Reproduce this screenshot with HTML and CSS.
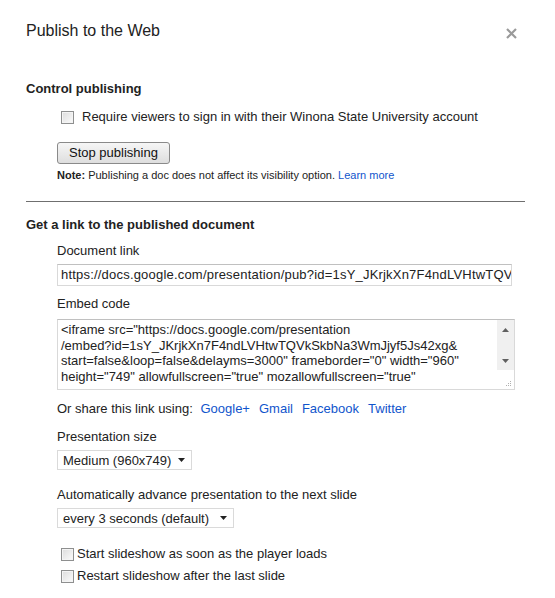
FILE: index.html
```html
<!DOCTYPE html>
<html>
<head>
<meta charset="utf-8">
<link rel="stylesheet" href="styles.css">
</head>
<body>
<div class="dialog">
  <div class="header">
    <div class="title">Publish to the Web</div>
    <svg class="close" width="11" height="11" viewBox="0 0 11 11"><path d="M1 1L10 10M10 1L1 10" stroke="#9a9a9a" stroke-width="2.2" fill="none"/></svg>
  </div>

  <div class="h2 h2-first">Control publishing</div>
  <div class="indent">
    <div class="check-row check-row-top"><span class="cb"></span><span>Require viewers to sign in with their Winona State University account</span></div>
    <div class="btn">Stop publishing</div>
    <div class="note"><b>Note:</b> Publishing a doc does not affect its visibility option. <span class="link">Learn more</span></div>
  </div>

  <div class="rule"></div>

  <div class="h2 h2-second">Get a link to the published document</div>
  <div class="indent">
    <div class="label label-doc">Document link</div>
    <div class="input">https://docs.google.com/presentation/pub?id=1sY_JKrjkXn7F4ndLVHtwTQV</div>
    <div class="label label-embed">Embed code</div>
    <div class="textarea">
      <div class="ta-text">&lt;iframe src="https://docs.google.com/presentation<br>/embed?id=1sY_JKrjkXn7F4ndLVHtwTQVkSkbNa3WmJjyf5Js42xg&amp;<br>start=false&amp;loop=false&amp;delayms=3000" frameborder="0" width="960"<br>height="749" allowfullscreen="true" mozallowfullscreen="true"</div>
      <div class="sb">
        <div class="sb-track">
          <svg width="7" height="4" viewBox="0 0 7 4"><path d="M0 4L3.5 0L7 4Z" fill="#606060"/></svg>
          <svg width="7" height="4" viewBox="0 0 7 4"><path d="M0 0L3.5 4L7 0Z" fill="#606060"/></svg>
        </div>
        <div class="grip">
          <svg width="7" height="7" viewBox="0 0 7 7"><g fill="#b0b0b0"><rect x="5" y="1" width="1" height="1"/><rect x="3" y="3" width="1" height="1"/><rect x="5" y="3" width="1" height="1"/><rect x="1" y="5" width="1" height="1"/><rect x="3" y="5" width="1" height="1"/><rect x="5" y="5" width="1" height="1"/></g></svg>
        </div>
      </div>
    </div>
    <div class="share">Or share this link using: <span class="link">Google+</span><span class="link">Gmail</span><span class="link">Facebook</span><span class="link">Twitter</span></div>
    <div class="label label-size">Presentation size</div>
    <div class="select select-size"><span class="sel-text">Medium (960x749)</span><svg width="7" height="4" viewBox="0 0 7 4"><path d="M0 0L3.5 4L7 0Z" fill="#222"/></svg></div>
    <div class="label label-auto">Automatically advance presentation to the next slide</div>
    <div class="select select-auto"><span class="sel-text">every 3 seconds (default)</span><svg width="7" height="4" viewBox="0 0 7 4"><path d="M0 0L3.5 4L7 0Z" fill="#222"/></svg></div>
    <div class="check-row check-row-a"><span class="cb"></span><span>Start slideshow as soon as the player loads</span></div>
    <div class="check-row check-row-b"><span class="cb"></span><span>Restart slideshow after the last slide</span></div>
  </div>
</div>
</body>
</html>
```

FILE: styles.css
```css
html, body {
  margin: 0;
  padding: 0;
  background: #fff;
}
body {
  font-family: "Liberation Sans", Arial, sans-serif;
  font-size: 13px;
  color: #222;
}
.dialog {
  padding: 21px 30px 0 26px;
}
.header {
  display: flex;
  justify-content: space-between;
  align-items: center;
  height: 20px;
}
.title {
  font-size: 16px;
  line-height: 20px;
  color: #222;
}
.close {
  margin-right: 8px;
  margin-top: 4px;
}
.h2 {
  font-weight: bold;
  font-size: 13px;
  line-height: 18px;
}
.h2-first {
  margin-top: 39px;
}
.h2-second {
  margin-top: 14px;
}
.indent {
  margin-left: 31px;
}
.check-row {
  display: flex;
  align-items: center;
  line-height: 18px;
}
.check-row-top {
  margin-top: 10px;
}
.check-row-top .cb {
  margin: 0 8px 0 4px;
}
.cb {
  display: inline-block;
  width: 11px;
  height: 11px;
  border: 1px solid #8e8f8f;
  background: linear-gradient(135deg, #dcdcdc 0%, #f2f2f2 70%, #fbfbfb 100%);
  box-shadow: inset 0 0 0 1px #f4f4f4;
  flex: none;
}
.btn {
  display: inline-block;
  margin-top: 16px;
  height: 20px;
  line-height: 20px;
  padding: 0 11px;
  border: 1px solid #8a8a8a;
  border-radius: 3px;
  background: linear-gradient(#f6f6f6, #dedede);
  font-size: 13px;
  color: #111;
}
.note {
  font-size: 11px;
  line-height: 14px;
  margin-top: 4px;
}
.note b {
  color: #222;
}
.link {
  color: #15c;
}
.rule {
  height: 1px;
  background: #6f6f6f;
  margin-top: 19px;
}
.label {
  line-height: 18px;
}
.label-doc {
  margin-top: 8px;
}
.input {
  margin-top: 4px;
  height: 20px;
  line-height: 20px;
  border: 1px solid #d9d9d9;
  border-top-color: #c0c0c0;
  padding: 0 3px;
  white-space: nowrap;
  overflow: hidden;
  width: 447px;
  font-size: 13px;
  letter-spacing: 0.2px;
}
.label-embed {
  margin-top: 9px;
}
.textarea {
  margin-top: 6px;
  width: 456px;
  height: 69px;
  border: 1px solid #d9d9d9;
  border-top-color: #c0c0c0;
  display: flex;
  overflow: hidden;
}
.ta-text {
  flex: 1;
  padding: 2px 3px;
  line-height: 15.7px;
  font-size: 13px;
  white-space: nowrap;
  overflow: hidden;
}
.sb {
  width: 17px;
  display: flex;
  flex-direction: column;
  flex: none;
}
.sb-track {
  height: 50px;
  background: #f0f0f0;
  display: flex;
  flex-direction: column;
  align-items: center;
  justify-content: space-between;
  padding: 8px 0 7px;
  box-sizing: border-box;
}
.grip {
  flex: 1;
  display: flex;
  align-items: flex-end;
  justify-content: flex-end;
  padding: 0 2px 2px 0;
}
.share {
  margin-top: 10px;
  line-height: 18px;
}
.share .link {
  margin-left: 9px;
}
.share .link:first-child {
  margin-left: 4px;
}
.label-size {
  margin-top: 10px;
}
.select {
  display: flex;
  align-items: center;
  justify-content: space-between;
  height: 18px;
  border: 1px solid #dadada;
  padding: 0 6px 0 5px;
  font-size: 13px;
  white-space: nowrap;
}
.select-size {
  margin-top: 4px;
  width: 122px;
}
.select-auto {
  margin-top: 4px;
  width: 164px;
}
.label-auto {
  margin-top: 16px;
}
.check-row-a {
  margin-top: 17px;
}
.check-row-a .cb, .check-row-b .cb {
  margin: 0 3px 0 4px;
}
.check-row-b {
  margin-top: 4px;
}
```
